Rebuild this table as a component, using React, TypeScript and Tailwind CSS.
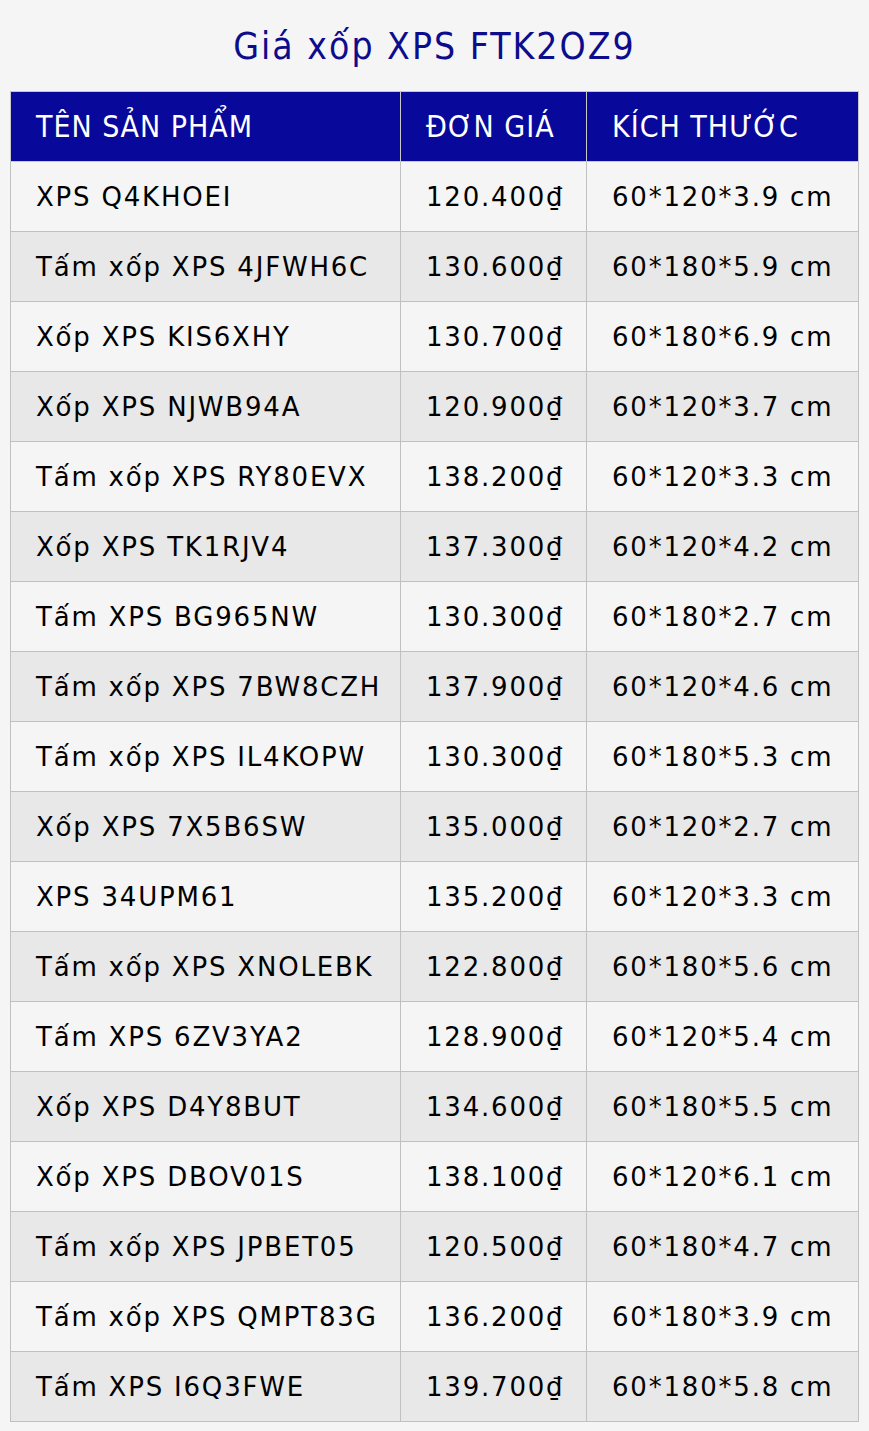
const rows: [string, string, string][] = [
    ['XPS Q4KHOEI', '120.400₫', '60*120*3.9 cm'],
    ['Tấm xốp XPS 4JFWH6C', '130.600₫', '60*180*5.9 cm'],
    ['Xốp XPS KIS6XHY', '130.700₫', '60*180*6.9 cm'],
    ['Xốp XPS NJWB94A', '120.900₫', '60*120*3.7 cm'],
    ['Tấm xốp XPS RY80EVX', '138.200₫', '60*120*3.3 cm'],
    ['Xốp XPS TK1RJV4', '137.300₫', '60*120*4.2 cm'],
    ['Tấm XPS BG965NW', '130.300₫', '60*180*2.7 cm'],
    ['Tấm xốp XPS 7BW8CZH', '137.900₫', '60*120*4.6 cm'],
    ['Tấm xốp XPS IL4KOPW', '130.300₫', '60*180*5.3 cm'],
    ['Xốp XPS 7X5B6SW', '135.000₫', '60*120*2.7 cm'],
    ['XPS 34UPM61', '135.200₫', '60*120*3.3 cm'],
    ['Tấm xốp XPS XNOLEBK', '122.800₫', '60*180*5.6 cm'],
    ['Tấm XPS 6ZV3YA2', '128.900₫', '60*120*5.4 cm'],
    ['Xốp XPS D4Y8BUT', '134.600₫', '60*180*5.5 cm'],
    ['Xốp XPS DBOV01S', '138.100₫', '60*120*6.1 cm'],
    ['Tấm xốp XPS JPBET05', '120.500₫', '60*180*4.7 cm'],
    ['Tấm xốp XPS QMPT83G', '136.200₫', '60*180*3.9 cm'],
    ['Tấm XPS I6Q3FWE', '139.700₫', '60*180*5.8 cm'],
];

export default function App() {
    return (
        <div className="min-h-[1431px] bg-[#f5f5f5] px-[10px] pb-[10px] font-['DejaVu_Sans',sans-serif]">
            {/* Title */}
            <h1 className="h-[91px] flex items-center justify-center pt-[3px] text-[37px] tracking-[2px] text-[#0c0c8c] font-['DejaVu_Sans_Condensed','DejaVu_Sans',sans-serif]">
                Giá xốp XPS FTK2OZ9
            </h1>

            {/* Price table */}
            <table className="w-[849px] border-collapse text-[26px] tracking-[1.8px] text-black">
                <thead>
                    <tr className="h-[70px] bg-[#08089a] text-white text-[30px] tracking-[1px] font-['DejaVu_Sans_Condensed','DejaVu_Sans',sans-serif]">
                        <th className="w-[390px] border border-[#c8c8c8] pl-[25px] text-left font-normal">TÊN SẢN PHẨM</th>
                        <th className="w-[186px] border border-[#c8c8c8] pl-[25px] text-left font-normal">ĐƠN GIÁ</th>
                        <th className="border border-[#c8c8c8] pl-[25px] text-left font-normal">KÍCH THƯỚC</th>
                    </tr>
                </thead>
                <tbody>
                    {rows.map((r, i) => (
                        <tr key={r[0]} className={`h-[70px] ${i % 2 === 0 ? 'bg-[#f5f5f5]' : 'bg-[#e8e8e8]'}`}>
                            <td className="border border-[#c0c0c0] pl-[25px] pt-[2px] whitespace-nowrap">{r[0]}</td>
                            <td className="border border-[#c0c0c0] pl-[25px] pt-[2px] whitespace-nowrap">{r[1]}</td>
                            <td className="border border-[#c0c0c0] pl-[25px] pt-[2px] whitespace-nowrap">{r[2]}</td>
                        </tr>
                    ))}
                </tbody>
            </table>
        </div>
    );
}
